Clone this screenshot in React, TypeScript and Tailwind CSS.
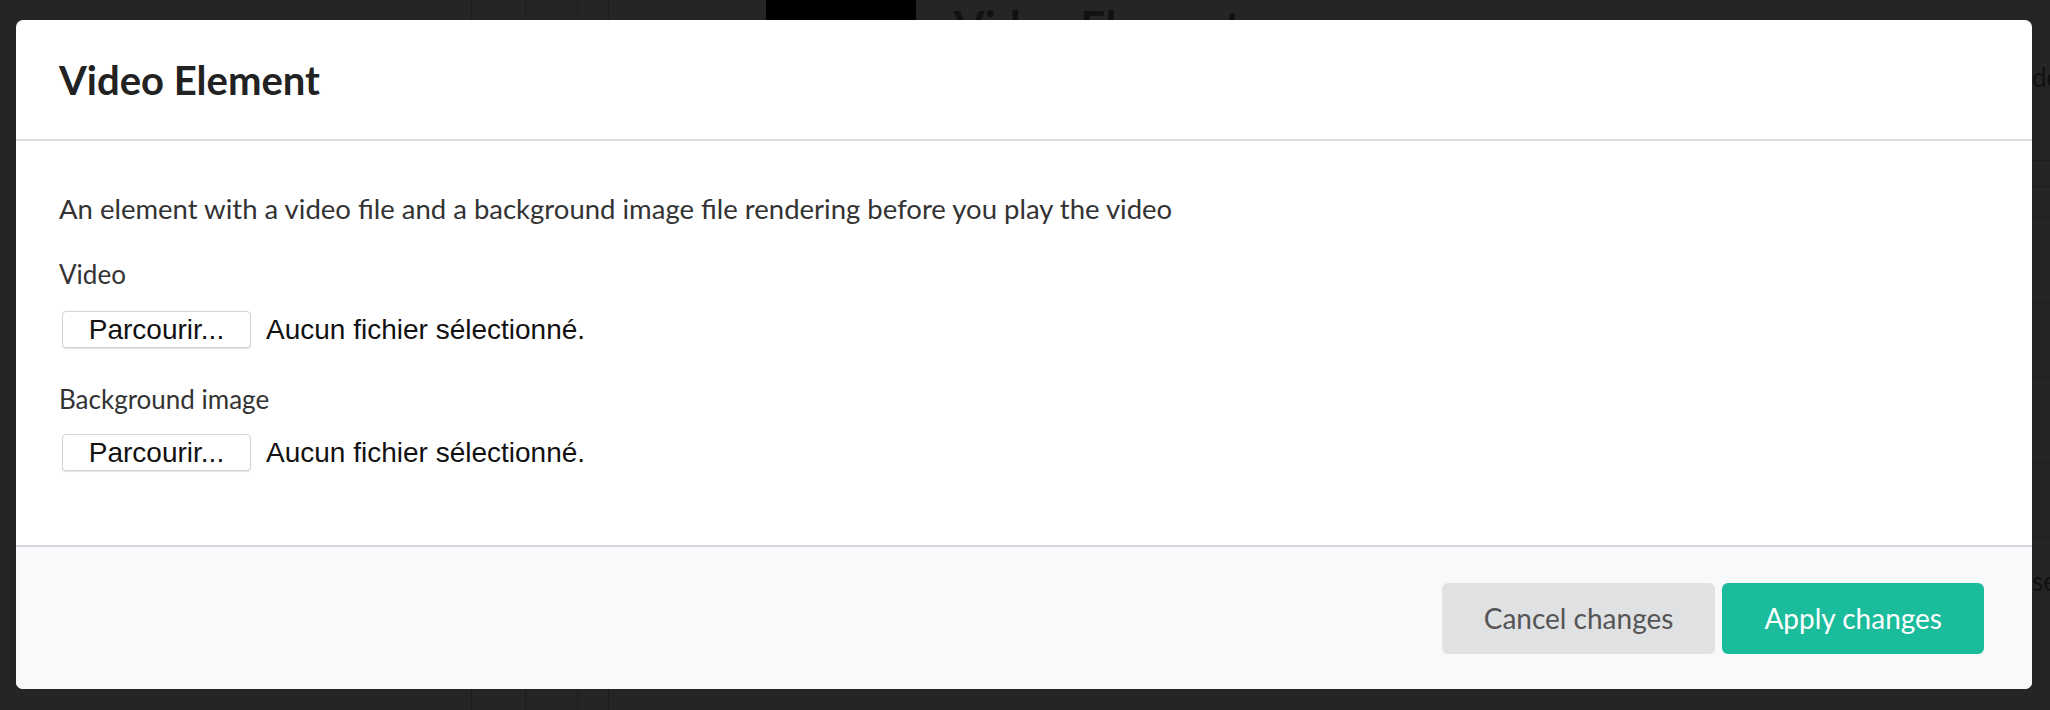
import React from 'react';

const lato = { fontFamily: 'Lato, "Open Sans", sans-serif' };

const FileInput: React.FC = () => (
  <div className="flex items-center" style={{ fontFamily: '"Liberation Sans", Arial, sans-serif' }}>
    <button className="ml-[3px] h-[37px] w-[189px] rounded-[4px] border border-[#d4d4d4] bg-white text-[28px] leading-none text-[#111] shadow-[0_1px_1px_rgba(0,0,0,0.12)]">
      Parcourir...
    </button>
    <span className="ml-[15px] text-[28px] leading-none text-[#111]">Aucun fichier sélectionné.</span>
  </div>
);

export default function App() {
  return (
    <div className="relative h-[710px] w-full overflow-hidden bg-[#252525]" style={lato}>
      {/* editor behind the dialog */}
      <div className="flex h-full">
        <div className="w-[472px] shrink-0 border-r border-[#1d1d1d]" />
        <div className="w-[54px] shrink-0 border-r border-[#1d1d1d]" />
        <div className="w-[52px] shrink-0 border-r border-[#1d1d1d]" />
        <div className="w-[30px] shrink-0" />
        <div className="w-[117px] shrink-0 border-l border-[#1d1d1d]" />
        <div className="w-[41px] shrink-0" />
        <div className="h-[160px] w-[150px] shrink-0 bg-black" />
        <div className="flex flex-1 flex-col pl-[38px] pt-[4px]">
          <div className="text-[44px] font-bold leading-none text-[#111]">Video Element</div>
        </div>
        <div className="flex w-[18px] shrink-0 flex-col overflow-hidden">
          <div className="h-[64px]" />
          <div className="whitespace-nowrap text-[26px] leading-none text-[#111]">de</div>
          <div className="mt-[70px] border-t border-[#1d1d1d]" />
          <div className="mt-[25px] border-t border-[#1d1d1d]" />
          <div className="mt-[30px] border-t border-[#1d1d1d]" />
          <div className="mt-[84px] border-t border-[#1d1d1d]" />
          <div className="mt-[74px] border-t border-[#1d1d1d]" />
          <div className="mt-[84px] border-t border-[#1d1d1d]" />
          <div className="mt-[74px] border-t border-[#1d1d1d]" />
          <div className="mt-[30px] whitespace-nowrap text-[26px] leading-none text-[#111]">se</div>
        </div>
      </div>

      {/* dialog */}
      <div className="absolute inset-0 pl-[16px] pt-[20px]">
        <div className="flex h-[669px] w-[2016px] flex-col overflow-hidden rounded-[7px] bg-white">
          <div className="flex h-[121px] shrink-0 items-center border-b-2 border-[#dedede] px-[43px]">
            <h2 className="text-[40px] font-bold leading-none text-[#222]">Video Element</h2>
          </div>

          <div className="flex-1 px-[43px] pt-[48px] text-[26px] leading-[39px] text-[#333]">
            <p className="text-[27.5px]">
              An element with a video file and a background image file rendering before you play the video
            </p>
            <div className="mt-[27px]">Video</div>
            <div className="mt-[17px]">
              <FileInput />
            </div>
            <div className="mt-[32px]">Background image</div>
            <div className="mt-[15px]">
              <FileInput />
            </div>
          </div>

          <div className="flex h-[144px] shrink-0 items-center justify-end gap-[7px] border-t-2 border-[#d6d7db] bg-[#f8f9fa] pr-[48px]">
            <button className="h-[71px] rounded-[6px] bg-[#e0e1e3] px-[42px] text-[28px] text-[#555]">
              Cancel changes
            </button>
            <button className="h-[71px] rounded-[6px] bg-[#1abc9c] px-[42px] text-[28px] text-white">
              Apply changes
            </button>
          </div>
        </div>
      </div>
    </div>
  );
}
